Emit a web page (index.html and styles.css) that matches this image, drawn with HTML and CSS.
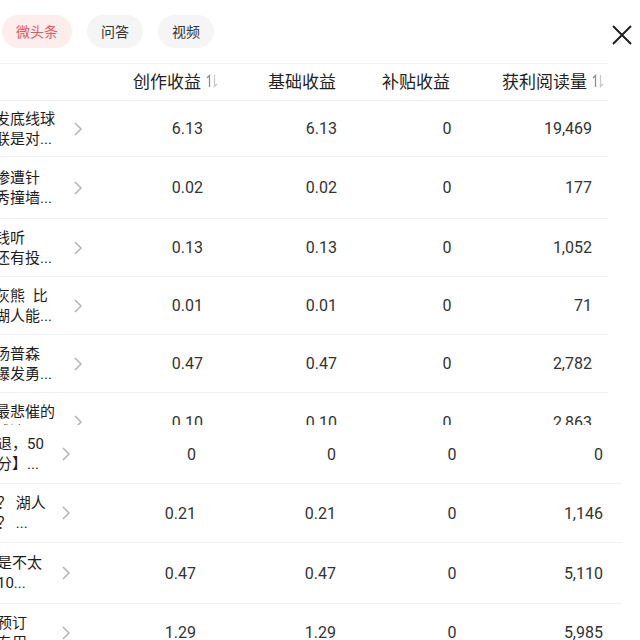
FILE: index.html
```html
<!DOCTYPE html>
<html lang="zh-CN">
<head>
<meta charset="utf-8">
<title>收益明细</title>
<link rel="stylesheet" href="styles.css">
</head>
<body>
<div class="page">
  <div class="topbar">
    <div class="tab tab-active">微头条</div>
    <div class="tab">问答</div>
    <div class="tab">视频</div>
    <svg class="close" width="20" height="20" viewBox="0 0 20 20"><path d="M1 1L19 19M19 1L1 19" fill="none" stroke="#1f1f1f" stroke-width="2"/></svg>
  </div>

  <div class="thead">
    <div></div>
    <div class="th">创作收益<svg class="sort" width="12" height="14" viewBox="0 0 12 14"><path d="M3.5 13V1.5L1 4" fill="none" stroke="#8f8f8f" stroke-width="1.3"/><path d="M8.5 1v11.5L11 10" fill="none" stroke="#c8c8c8" stroke-width="1.3"/></svg></div>
    <div class="th">基础收益</div>
    <div class="th">补贴收益</div>
    <div class="th">获利阅读量<svg class="sort" width="12" height="14" viewBox="0 0 12 14"><path d="M3.5 13V1.5L1 4" fill="none" stroke="#8f8f8f" stroke-width="1.3"/><path d="M8.5 1v11.5L11 10" fill="none" stroke="#c8c8c8" stroke-width="1.3"/></svg></div>
  </div>

  <div class="row row-a h56">
    <div class="title"><span>发底线球</span><span>联是对...</span></div>
    <svg class="chev" width="8" height="14" viewBox="0 0 8 14"><path d="M1 1l6 6-6 6" fill="none" stroke="#b3b3b3" stroke-width="1.5"/></svg>
    <div class="v r">6.13</div><div class="v r p2">6.13</div><div class="v c">0</div><div class="v r">19,469</div>
  </div>
  <div class="row row-a h62">
    <div class="title"><span>惨遭针</span><span>秀撞墙...</span></div>
    <svg class="chev" width="8" height="14" viewBox="0 0 8 14"><path d="M1 1l6 6-6 6" fill="none" stroke="#b3b3b3" stroke-width="1.5"/></svg>
    <div class="v r">0.02</div><div class="v r p2">0.02</div><div class="v c">0</div><div class="v r">177</div>
  </div>
  <div class="row row-a h58">
    <div class="title"><span>钱听</span><span>还有投...</span></div>
    <svg class="chev" width="8" height="14" viewBox="0 0 8 14"><path d="M1 1l6 6-6 6" fill="none" stroke="#b3b3b3" stroke-width="1.5"/></svg>
    <div class="v r">0.13</div><div class="v r p2">0.13</div><div class="v c">0</div><div class="v r">1,052</div>
  </div>
  <div class="row row-a h58">
    <div class="title"><span>灰熊&ensp;比</span><span>湖人能...</span></div>
    <svg class="chev" width="8" height="14" viewBox="0 0 8 14"><path d="M1 1l6 6-6 6" fill="none" stroke="#b3b3b3" stroke-width="1.5"/></svg>
    <div class="v r">0.01</div><div class="v r p2">0.01</div><div class="v c">0</div><div class="v r">71</div>
  </div>
  <div class="row row-a h58">
    <div class="title"><span>汤普森</span><span>爆发勇...</span></div>
    <svg class="chev" width="8" height="14" viewBox="0 0 8 14"><path d="M1 1l6 6-6 6" fill="none" stroke="#b3b3b3" stroke-width="1.5"/></svg>
    <div class="v r">0.47</div><div class="v r p2">0.47</div><div class="v c">0</div><div class="v r">2,782</div>
  </div>
  <div class="row row-a clip">
    <div class="title"><span>最悲催的</span><span>球迷...</span></div>
    <svg class="chev" width="8" height="14" viewBox="0 0 8 14"><path d="M1 1l6 6-6 6" fill="none" stroke="#b3b3b3" stroke-width="1.5"/></svg>
    <div class="v r">0.10</div><div class="v r p2">0.10</div><div class="v c">0</div><div class="v r">2,863</div>
  </div>
  <div class="row row-b h59">
    <div class="title"><span>退，50</span><span>分】...</span></div>
    <svg class="chev" width="8" height="14" viewBox="0 0 8 14"><path d="M1 1l6 6-6 6" fill="none" stroke="#b3b3b3" stroke-width="1.5"/></svg>
    <div class="v r">0</div><div class="v r p2">0</div><div class="v c">0</div><div class="v r">0</div>
  </div>
  <div class="row row-b h59">
    <div class="title"><span>？ 湖人</span><span>？ ...</span></div>
    <svg class="chev" width="8" height="14" viewBox="0 0 8 14"><path d="M1 1l6 6-6 6" fill="none" stroke="#b3b3b3" stroke-width="1.5"/></svg>
    <div class="v r">0.21</div><div class="v r p2">0.21</div><div class="v c">0</div><div class="v r">1,146</div>
  </div>
  <div class="row row-b h61">
    <div class="title"><span>是不太</span><span>10...</span></div>
    <svg class="chev" width="8" height="14" viewBox="0 0 8 14"><path d="M1 1l6 6-6 6" fill="none" stroke="#b3b3b3" stroke-width="1.5"/></svg>
    <div class="v r">0.47</div><div class="v r p2">0.47</div><div class="v c">0</div><div class="v r">5,110</div>
  </div>
  <div class="row row-b h58">
    <div class="title"><span>预订</span><span>专用...</span></div>
    <svg class="chev" width="8" height="14" viewBox="0 0 8 14"><path d="M1 1l6 6-6 6" fill="none" stroke="#b3b3b3" stroke-width="1.5"/></svg>
    <div class="v r">1.29</div><div class="v r p2">1.29</div><div class="v c">0</div><div class="v r">5,985</div>
  </div>
</div>
</body>
</html>
```
FILE: styles.css
```css
* { box-sizing: border-box; margin: 0; padding: 0; }
html, body { width: 640px; height: 640px; overflow: hidden; background: #ffffff; }
body { font-family: Roboto, "Noto Sans CJK SC", sans-serif; color: #222222; }

.page { width: 640px; height: 640px; overflow: hidden; }

.topbar {
  display: flex;
  align-items: center;
  gap: 15px;
  height: 63px;
  padding-left: 2px;
}
.tab {
  height: 33px;
  padding: 0 14px;
  border-radius: 17px;
  background: #f5f5f5;
  color: #333333;
  font-family: "Noto Sans CJK SC", sans-serif;
  font-size: 14px;
  line-height: 33px;
}
.tab-active {
  background: #fdeded;
  color: #e9585b;
}
.close {
  margin-left: auto;
  margin-right: 8px;
  margin-top: 6px;
}

.thead {
  display: grid;
  grid-template-columns: 133px 135px 114px 120px 106px;
  align-items: center;
  width: 608px;
  height: 38px;
  padding-bottom: 3px;
  border-top: 1px solid #f3f3f3;
  border-bottom: 1px solid #eeeeee;
  font-family: "Noto Sans CJK SC", sans-serif;
  font-size: 17px;
  color: #222222;
}
.th { display: flex; align-items: center; white-space: nowrap; }
.sort { margin-left: 5px; }

.row {
  display: grid;
  align-items: center;
  border-bottom: 1px solid #f0f0f0;
}
.row-a {
  margin-left: -5px;
  width: 613px;
  grid-template-columns: 65px 22px 121px 184px 120px 85px;
}
.row-b {
  margin-left: -3px;
  width: 625px;
  grid-template-columns: 63px 10px 126px 190px 132px 85px;
}
.h56 { height: 56px; }
.h58 { height: 58px; }
.h59 { height: 59px; }
.h61 { height: 61px; }
.h62 { height: 62px; }
.clip {
  height: 32px;
  overflow: hidden;
  grid-template-rows: 58px;
  border-bottom: none;
}

.title {
  display: flex;
  flex-direction: column;
  font-size: 15px;
  line-height: 20px;
  white-space: nowrap;
  overflow: hidden;
  color: #1e1e1e;
}
.chev { justify-self: end; }

.v {
  font-family: Roboto, sans-serif;
  font-size: 16px;
  color: #333333;
  white-space: nowrap;
}
.r { text-align: right; }
.c { text-align: center; }
.p2 { padding-right: 50px; }
```
